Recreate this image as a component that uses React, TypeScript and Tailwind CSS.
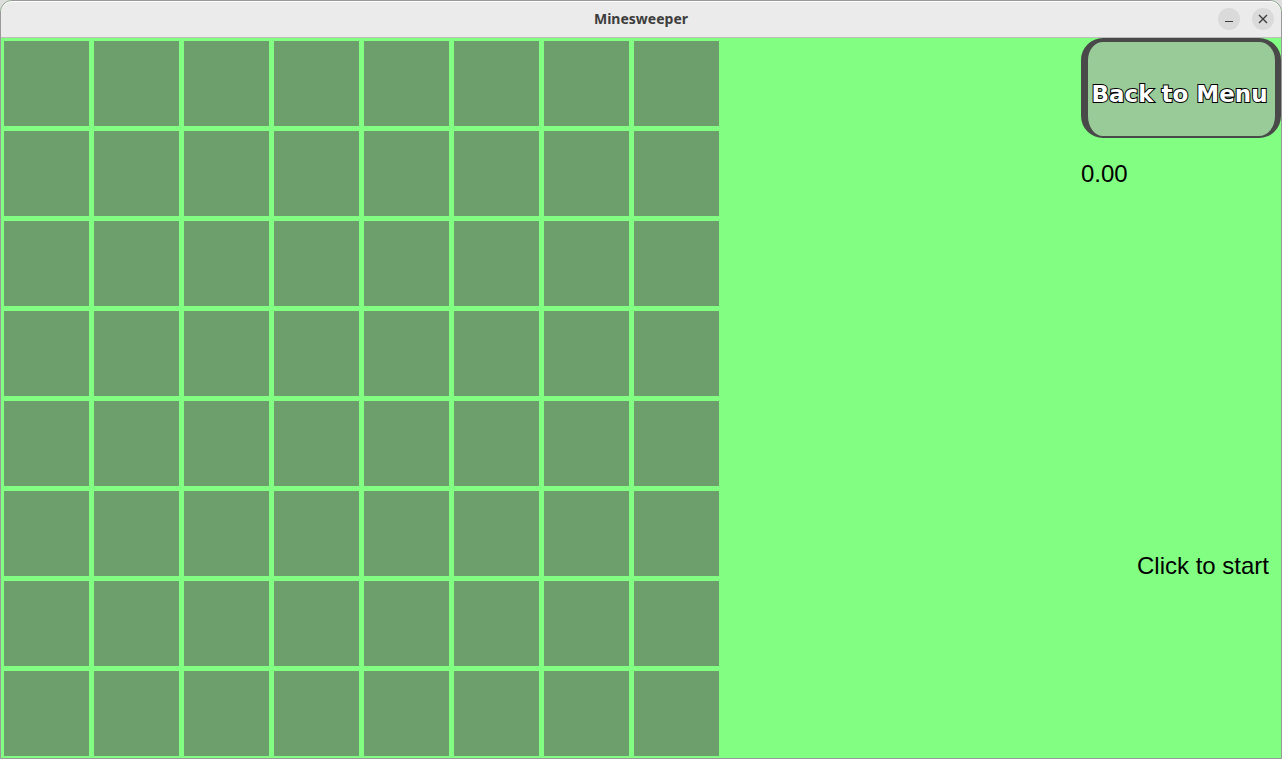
import React from "react";

const SIZE = 8;
const cells = Array.from({ length: SIZE * SIZE }, (_, index) => index);

function TitleBar() {
  return (
    <header className="grid h-[37px] shrink-0 grid-cols-[1fr_auto_1fr] items-center rounded-t-[11px] border-b border-[#bdbdbd] bg-[#ebebeb] shadow-[inset_0_1px_0_#ffffff]">
      <h1 className="col-start-2 font-['Noto_Sans',sans-serif] text-[14px] leading-5 font-bold text-[#3d3d3d]">
        Minesweeper
      </h1>
      <div className="flex justify-end gap-3 pr-[7px]">
        <button
          type="button"
          aria-label="Minimize"
          className="flex size-[22px] items-center justify-center rounded-full bg-[#dadada]"
        >
          <svg viewBox="0 0 16 16" className="size-4" aria-hidden="true">
            <path d="M4 10.5H12" stroke="#3d3d3d" strokeWidth="1" fill="none" />
          </svg>
        </button>
        <button
          type="button"
          aria-label="Close"
          className="flex size-[22px] items-center justify-center rounded-full bg-[#dadada]"
        >
          <svg viewBox="0 0 16 16" className="size-4" aria-hidden="true">
            <path d="M4 4L12 12M12 4L4 12" stroke="#3d3d3d" strokeWidth="1.4" fill="none" />
          </svg>
        </button>
      </div>
    </header>
  );
}

function Board() {
  return (
    <div className="grid grid-cols-[repeat(8,85px)] content-start gap-[5px] pt-[3px] pb-[2px] pl-[3px]">
      {cells.map((cell) => (
        <button
          key={cell}
          type="button"
          aria-label={`Row ${Math.floor(cell / SIZE) + 1}, column ${(cell % SIZE) + 1}`}
          className="h-[85px] bg-[#6d9f6d]"
        />
      ))}
    </div>
  );
}

function SidePanel() {
  return (
    <aside className="flex w-[200px] flex-col font-['Liberation_Sans',Arial,sans-serif] text-2xl leading-7 text-black">
      <button
        type="button"
        className="flex h-[100px] items-center justify-center rounded-[22px] border-t-4 border-r-[6px] border-b-2 border-l-[7px] border-[#494949] bg-[#99cb99] pt-2.5 pr-1 font-['DejaVu_Sans',sans-serif] text-[23px] leading-7 font-bold whitespace-nowrap text-white [-webkit-text-stroke:2px_black] [paint-order:stroke_fill]"
      >
        Back to Menu
      </button>
      <p className="mt-[22px]">0.00</p>
      <p className="mt-auto pr-3 pb-[178px] text-right">Click to start</p>
    </aside>
  );
}

export default function App() {
  return (
    <div className="flex min-h-screen bg-[#dedede]">
      <main className="flex grow flex-col overflow-hidden rounded-t-xl border border-[#999999] bg-[#82ff82]">
        <TitleBar />
        <div className="flex grow justify-between">
          <Board />
          <SidePanel />
        </div>
      </main>
    </div>
  );
}
